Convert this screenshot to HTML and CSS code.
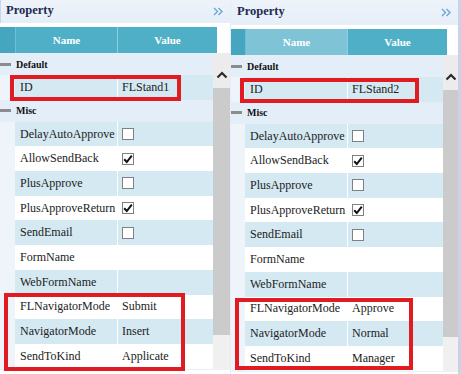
FILE: index.html
```html
<!DOCTYPE html>
<html lang="en">
<head>
    <meta charset="UTF-8">
    <title>Property grid - FLStand</title>
    <link rel="stylesheet" href="styles.css">
</head>
<body>

<div class="panels">

    <section class="panel">
        <div class="panel-title">
            <span>Property</span>
            <svg class="collapse" width="10" height="9" viewBox="0 0 10 9"><path d="M1 1l3.5 3.5L1 8M5.5 1L9 4.5 5.5 8" fill="none" stroke="#6aa6d8" stroke-width="1.4"/></svg>
        </div>
        <div class="grid-head">
            <div class="hc hc-strip"></div>
            <div class="hc hc-name">Name</div>
            <div class="hc hc-value">Value</div>
            <div class="hc-blank"></div>
        </div>
        <div class="grid-body">
            <div class="rows">
                <div class="group"><span class="dash"></span>Default</div>
                <div class="row alt"><div class="c-name">ID</div><div class="c-value">FLStand1</div></div>
                <div class="group"><span class="dash"></span>Misc</div>
                <div class="row alt"><div class="c-name">DelayAutoApprove</div><div class="c-value"><span class="cb"></span></div></div>
                <div class="row"><div class="c-name">AllowSendBack</div><div class="c-value"><span class="cb"><svg width="10" height="10" viewBox="0 0 10 10"><path d="M1.2 5.2l2.6 2.8L8.8 1.6" fill="none" stroke="#111" stroke-width="2"/></svg></span></div></div>
                <div class="row alt"><div class="c-name">PlusApprove</div><div class="c-value"><span class="cb"></span></div></div>
                <div class="row"><div class="c-name">PlusApproveReturn</div><div class="c-value"><span class="cb"><svg width="10" height="10" viewBox="0 0 10 10"><path d="M1.2 5.2l2.6 2.8L8.8 1.6" fill="none" stroke="#111" stroke-width="2"/></svg></span></div></div>
                <div class="row alt"><div class="c-name">SendEmail</div><div class="c-value"><span class="cb"></span></div></div>
                <div class="row"><div class="c-name">FormName</div><div class="c-value"></div></div>
                <div class="row alt"><div class="c-name">WebFormName</div><div class="c-value"></div></div>
                <div class="row"><div class="c-name">FLNavigatorMode</div><div class="c-value">Submit</div></div>
                <div class="row alt"><div class="c-name">NavigatorMode</div><div class="c-value">Insert</div></div>
                <div class="row"><div class="c-name">SendToKind</div><div class="c-value">Applicate</div></div>
            </div>
            <div class="vscroll">
                <div class="vs-up"><svg width="12" height="8" viewBox="0 0 12 8"><path d="M1.5 6.5L6 2l4.5 4.5" fill="none" stroke="#2b2b2b" stroke-width="2.2"/></svg></div>
                <div class="vs-thumb"></div>
                <div class="vs-track"></div>
            </div>
        </div>
        <div class="mark mark-id"></div>
        <div class="mark mark-nav"></div>
    </section>

    <section class="panel panel--right">
        <div class="panel-title">
            <span>Property</span>
            <svg class="collapse" width="10" height="9" viewBox="0 0 10 9"><path d="M1 1l3.5 3.5L1 8M5.5 1L9 4.5 5.5 8" fill="none" stroke="#6aa6d8" stroke-width="1.4"/></svg>
        </div>
        <div class="grid-head">
            <div class="hc hc-strip"></div>
            <div class="hc hc-name hover">Name</div>
            <div class="hc hc-value">Value</div>
            <div class="hc-blank"></div>
        </div>
        <div class="grid-body">
            <div class="rows">
                <div class="group"><span class="dash"></span>Default</div>
                <div class="row alt"><div class="c-name">ID</div><div class="c-value">FLStand2</div></div>
                <div class="group"><span class="dash"></span>Misc</div>
                <div class="row alt"><div class="c-name">DelayAutoApprove</div><div class="c-value"><span class="cb"></span></div></div>
                <div class="row"><div class="c-name">AllowSendBack</div><div class="c-value"><span class="cb"><svg width="10" height="10" viewBox="0 0 10 10"><path d="M1.2 5.2l2.6 2.8L8.8 1.6" fill="none" stroke="#111" stroke-width="2"/></svg></span></div></div>
                <div class="row alt"><div class="c-name">PlusApprove</div><div class="c-value"><span class="cb"></span></div></div>
                <div class="row"><div class="c-name">PlusApproveReturn</div><div class="c-value"><span class="cb"><svg width="10" height="10" viewBox="0 0 10 10"><path d="M1.2 5.2l2.6 2.8L8.8 1.6" fill="none" stroke="#111" stroke-width="2"/></svg></span></div></div>
                <div class="row alt"><div class="c-name">SendEmail</div><div class="c-value"><span class="cb"></span></div></div>
                <div class="row"><div class="c-name">FormName</div><div class="c-value"></div></div>
                <div class="row alt"><div class="c-name">WebFormName</div><div class="c-value"></div></div>
                <div class="row"><div class="c-name">FLNavigatorMode</div><div class="c-value">Approve</div></div>
                <div class="row alt"><div class="c-name">NavigatorMode</div><div class="c-value">Normal</div></div>
                <div class="row"><div class="c-name">SendToKind</div><div class="c-value">Manager</div></div>
            </div>
            <div class="vscroll">
                <div class="vs-up"><svg width="12" height="8" viewBox="0 0 12 8"><path d="M1.5 6.5L6 2l4.5 4.5" fill="none" stroke="#2b2b2b" stroke-width="2.2"/></svg></div>
                <div class="vs-thumb"></div>
                <div class="vs-track"></div>
            </div>
        </div>
        <div class="mark mark-id"></div>
        <div class="mark mark-nav"></div>
    </section>

</div>

</body>
</html>
```

FILE: styles.css
```css
body {
    margin: 0;
    background-color: #fff;
    font-family: "Liberation Serif", serif;
    color: #222;
}
.panels {
    display: flex;
    gap: 1px;
    background-color: #e6edf6;
    height: 374px;
}
.panel {
    position: relative;
    width: 230px;
    background-color: #fff;
}
.panel-title {
    display: flex;
    align-items: center;
    justify-content: space-between;
    height: 23px;
    padding: 0 7px 0 5px;
    background: linear-gradient(#eef3fa, #e6eef8);
    border-left: 1px solid #c9d6ea;
    font-size: 12.5px;
    font-weight: bold;
    color: #1d2b50;
    margin-bottom: 4px;
}
.panel-title span {
    margin-top: -2px;
}
.grid-head {
    display: flex;
    height: 26px;
    color: #fff;
    font-size: 11px;
    font-weight: bold;
}
.hc {
    display: flex;
    align-items: center;
    justify-content: center;
    background-color: #4eafc7;
}
.hc-strip {
    width: 15px;
    background-color: #46a6bf;
}
.hc-name {
    width: 101px;
    border-left: 1px solid #6fbfd3;
}
.hc-name.hover {
    background-color: #7fc4d6;
}
.hc-value {
    width: 99px;
    border-left: 1px solid #8fcfde;
}
.hc-blank {
    flex: 1;
    background-color: #fff;
}
.grid-body {
    display: flex;
    background-color: #eaf1f9;
}
.rows {
    width: 213px;
}
.group {
    display: flex;
    align-items: center;
    height: 22px;
    background-color: #e4eef9;
    font-size: 10px;
    font-weight: bold;
    color: #111;
}
.dash {
    width: 11px;
    height: 3px;
    margin: 0 5px 0 0;
    background-color: #8c8c8c;
}
.row {
    display: flex;
    height: 24.7px;
    padding-left: 15px;
    background-color: #eff4fa;
    font-size: 12px;
}
.c-name, .c-value {
    display: flex;
    align-items: center;
    background-color: #fff;
}
.c-name {
    width: 97px;
    padding-left: 5px;
}
.c-value {
    flex: 1;
    padding-left: 4px;
    border-left: 1px solid #fff;
}
.row.alt .c-name, .row.alt .c-value {
    background-color: #d4e9f2;
}
.cb {
    display: flex;
    align-items: center;
    justify-content: center;
    width: 10px;
    height: 10px;
    border: 1px solid #808080;
    background-color: #fff;
}
.vscroll {
    display: flex;
    flex-direction: column;
    width: 17px;
    background-color: #fff;
}
.vs-up {
    display: flex;
    align-items: flex-end;
    justify-content: center;
    height: 35px;
    padding-bottom: 9px;
    box-sizing: border-box;
    background-color: #ececec;
}
.vs-thumb {
    height: 247px;
    background-color: #cbcbcb;
}
.vs-track {
    height: 35px;
    background-color: #f0f0f0;
}
.mark {
    position: absolute;
    border: 4px solid #e11b22;
    box-sizing: border-box;
}
.mark-id {
    left: 10px;
    top: 75px;
    width: 171px;
    height: 26px;
}
.mark-nav {
    left: 4px;
    top: 293px;
    width: 181px;
    height: 78px;
}

/* right panel sits 2px lower and has a border on the outside */
.panel--right {
    border-right: 3px solid #c8d2ea;
    width: 227px;
}
.panel--right .panel-title {
    height: 25px;
    border-left: none;
    padding-left: 6px;
}
.panel--right .hc-strip {
    width: 14px;
}
.panel--right .row {
    padding-left: 14px;
}
.panel--right .vscroll {
    width: 15px;
}
.panel--right .mark-id {
    left: 9px;
    top: 78px;
    width: 179px;
    height: 25px;
}
.panel--right .mark-nav {
    left: 4px;
    top: 298px;
    width: 178px;
    height: 72px;
}
```
